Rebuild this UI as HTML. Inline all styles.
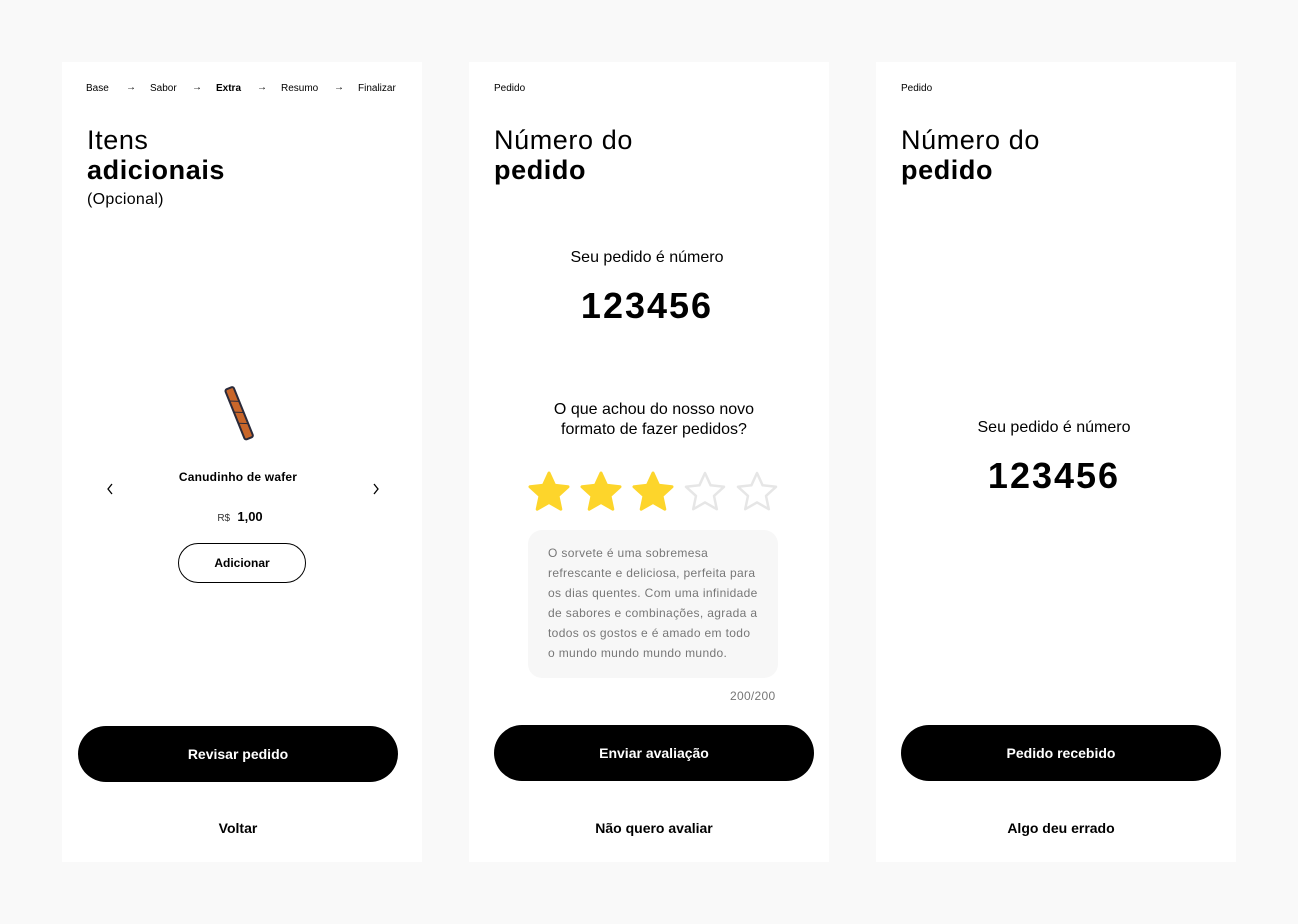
<!DOCTYPE html>
<html><head><meta charset="utf-8"><style>
*{margin:0;padding:0;box-sizing:border-box}
body{width:1298px;height:924px;background:#f9f9f9;font-family:"Liberation Sans",sans-serif;color:#000;position:relative;overflow:hidden}
.p{position:absolute;top:62px;width:360px;height:800px;background:#fff}
.a{position:absolute;white-space:nowrap}
.c{position:absolute;left:0;width:360px;text-align:center}
.crumb{top:83px;font-size:10px;line-height:12px}
.t{left:25px;top:124px;font-size:27px;line-height:30px;letter-spacing:0.6px}
.btn{position:absolute;left:16px;width:320px;height:56px;border-radius:28px;background:#000;color:#fff;font-weight:bold;font-size:14px;text-align:center;line-height:56px}
.link{font-weight:bold;font-size:14px}
.num{font-size:36px;font-weight:bold;letter-spacing:2px}
</style></head><body>

<div class="p" style="left:62px">
 <div class="a crumb" style="left:24px;top:21px">Base</div>
 <div class="a crumb" style="left:64px;top:20px">→</div>
 <div class="a crumb" style="left:88px;top:21px">Sabor</div>
 <div class="a crumb" style="left:130px;top:20px">→</div>
 <div class="a crumb" style="left:154px;top:21px;font-weight:bold">Extra</div>
 <div class="a crumb" style="left:195px;top:20px">→</div>
 <div class="a crumb" style="left:219px;top:21px">Resumo</div>
 <div class="a crumb" style="left:272px;top:20px">→</div>
 <div class="a crumb" style="left:296px;top:21px">Finalizar</div>
 <div class="a t" style="top:63px">Itens<br><b>adicionais</b></div>
 <div class="a" style="left:25px;top:129px;font-size:16px;letter-spacing:0.3px">(Opcional)</div>
 <svg class="a" style="left:158px;top:322px" width="40" height="60" viewBox="0 0 40 60">
  <g transform="rotate(-22 20 30)"><rect x="15" y="2" width="9" height="54" rx="2" fill="#c8662a" stroke="#2a2a3a" stroke-width="2"/>
  <path d="M15 14 L24 18 M15 26 L24 30 M15 38 L24 42" stroke="#2a2a3a" stroke-width="1"/></g>
 </svg>
 <div class="c" style="top:408px;font-size:12px;font-weight:bold;left:-4px;letter-spacing:0.2px">Canudinho de wafer</div>
 <svg class="a" style="left:44px;top:421px" width="8" height="12" viewBox="0 0 8 12"><path d="M6 1 L2 6 L6 11" fill="none" stroke="#000" stroke-width="1.3"/></svg>
 <svg class="a" style="left:310px;top:421px" width="8" height="12" viewBox="0 0 8 12"><path d="M2 1 L6 6 L2 11" fill="none" stroke="#000" stroke-width="1.3"/></svg>
 <div class="c" style="top:447px;font-size:13px;left:-2px"><span style="font-size:10px;color:#333">R$</span>&nbsp; <b>1,00</b></div>
 <div class="a" style="left:116px;top:481px;width:128px;height:40px;border:1.3px solid #000;border-radius:20px;text-align:center;line-height:38px;font-size:12px;font-weight:bold">Adicionar</div>
 <div class="btn" style="top:664px">Revisar pedido</div>
 <div class="c link" style="top:758px;left:-4px">Voltar</div>
</div>

<div class="p" style="left:469px">
 <div class="a crumb" style="left:25px;top:21px">Pedido</div>
 <div class="a t" style="top:63px">Número do<br><b>pedido</b></div>
 <div class="c" style="top:187px;font-size:16px;left:-2px">Seu pedido é número</div>
 <div class="c num" style="top:223px;left:-2px">123456</div>
 <div class="c" style="top:338px;font-size:16px;line-height:20px;left:5px">O que achou do nosso novo<br>formato de fazer pedidos?</div>
 <svg class="a" style="left:56px;top:408px" width="256" height="46" viewBox="0 0 256 46">
  <defs><path id="s" d="M22 3 L27.6 15.3 L41 16.8 L31 25.9 L33.8 39.2 L22 32.4 L10.2 39.2 L13 25.9 L3 16.8 L16.4 15.3 Z" stroke-linejoin="round"/></defs>
  <use href="#s" x="2" fill="#fdd52b" stroke="#fdd52b" stroke-width="3"/>
  <use href="#s" x="54" fill="#fdd52b" stroke="#fdd52b" stroke-width="3"/>
  <use href="#s" x="106" fill="#fdd52b" stroke="#fdd52b" stroke-width="3"/>
  <use href="#s" x="158" fill="none" stroke="#e6e6e6" stroke-width="2.5"/>
  <use href="#s" x="210" fill="none" stroke="#e6e6e6" stroke-width="2.5"/>
 </svg>
 <div class="a" style="left:59px;top:468px;width:250px;height:148px;background:#f7f7f7;border-radius:14px;padding:13px 18px 13px 20px;font-size:12px;line-height:20px;color:#777;white-space:normal;letter-spacing:0.35px">O sorvete é uma sobremesa refrescante e deliciosa, perfeita para os dias quentes. Com uma infinidade de sabores e combinações, agrada a todos os gostos e é amado em todo o mundo mundo mundo mundo.</div>
 <div class="a" style="left:261px;top:627px;font-size:12px;color:#777;letter-spacing:0.3px">200/200</div>
 <div class="btn" style="top:663px;left:25px">Enviar avaliação</div>
 <div class="c link" style="top:758px;left:5px">Não quero avaliar</div>
</div>

<div class="p" style="left:876px">
 <div class="a crumb" style="left:25px;top:21px">Pedido</div>
 <div class="a t" style="top:63px">Número do<br><b>pedido</b></div>
 <div class="c" style="top:357px;font-size:16px;left:-2px">Seu pedido é número</div>
 <div class="c num" style="top:393px;left:-2px">123456</div>
 <div class="btn" style="top:663px;left:25px">Pedido recebido</div>
 <div class="c link" style="top:758px;left:5px">Algo deu errado</div>
</div>
</body></html>
